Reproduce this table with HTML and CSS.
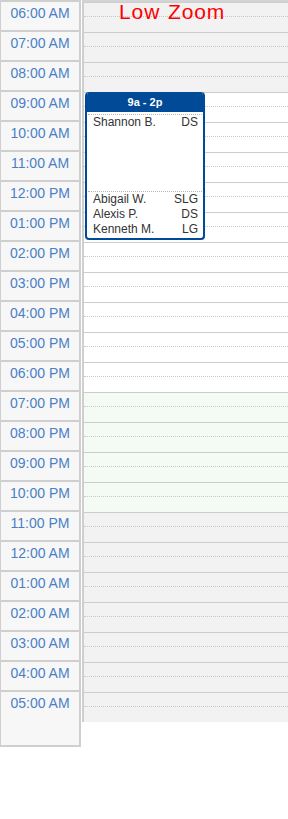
FILE: index.html
```html
<!DOCTYPE html>
<html>
<head>
<meta charset="utf-8">
<link rel="stylesheet" href="styles.css">
</head>
<body>
<div class="calendar">
  <div class="times">
    <div class="time">06:00 AM</div>
    <div class="time">07:00 AM</div>
    <div class="time">08:00 AM</div>
    <div class="time">09:00 AM</div>
    <div class="time">10:00 AM</div>
    <div class="time">11:00 AM</div>
    <div class="time">12:00 PM</div>
    <div class="time">01:00 PM</div>
    <div class="time">02:00 PM</div>
    <div class="time">03:00 PM</div>
    <div class="time">04:00 PM</div>
    <div class="time">05:00 PM</div>
    <div class="time">06:00 PM</div>
    <div class="time">07:00 PM</div>
    <div class="time">08:00 PM</div>
    <div class="time">09:00 PM</div>
    <div class="time">10:00 PM</div>
    <div class="time">11:00 PM</div>
    <div class="time">12:00 AM</div>
    <div class="time">01:00 AM</div>
    <div class="time">02:00 AM</div>
    <div class="time">03:00 AM</div>
    <div class="time">04:00 AM</div>
    <div class="time time-last">05:00 AM</div>
  </div>
  <div class="grid">
    <div class="title">Low Zoom</div>
    <div class="row off"><div class="half"></div><div class="half2"></div></div>
    <div class="row off"><div class="half"></div><div class="half2"></div></div>
    <div class="row off"><div class="half"></div><div class="half2"></div></div>
    <div class="row"><div class="half"></div><div class="half2"></div></div>
    <div class="row"><div class="half"></div><div class="half2"></div></div>
    <div class="row"><div class="half"></div><div class="half2"></div></div>
    <div class="row"><div class="half"></div><div class="half2"></div></div>
    <div class="row"><div class="half"></div><div class="half2"></div></div>
    <div class="row"><div class="half"></div><div class="half2"></div></div>
    <div class="row"><div class="half"></div><div class="half2"></div></div>
    <div class="row"><div class="half"></div><div class="half2"></div></div>
    <div class="row"><div class="half"></div><div class="half2"></div></div>
    <div class="row"><div class="half"></div><div class="half2"></div></div>
    <div class="row evening"><div class="half"></div><div class="half2"></div></div>
    <div class="row evening"><div class="half"></div><div class="half2"></div></div>
    <div class="row evening"><div class="half"></div><div class="half2"></div></div>
    <div class="row evening"><div class="half"></div><div class="half2"></div></div>
    <div class="row off"><div class="half"></div><div class="half2"></div></div>
    <div class="row off"><div class="half"></div><div class="half2"></div></div>
    <div class="row off"><div class="half"></div><div class="half2"></div></div>
    <div class="row off"><div class="half"></div><div class="half2"></div></div>
    <div class="row off"><div class="half"></div><div class="half2"></div></div>
    <div class="row off"><div class="half"></div><div class="half2"></div></div>
    <div class="row off"><div class="half"></div><div class="half2"></div></div>

    <div class="event">
      <div class="event-head">9a - 2p</div>
      <div class="event-body">
        <div class="section">
          <div class="person"><span>Shannon B.</span><span>DS</span></div>
        </div>
        <div class="spacer"></div>
        <div class="section">
          <div class="person"><span>Abigail W.</span><span>SLG</span></div>
          <div class="person"><span>Alexis P.</span><span>DS</span></div>
          <div class="person"><span>Kenneth M.</span><span>LG</span></div>
        </div>
      </div>
    </div>
  </div>
</div>
</body>
</html>
```
FILE: styles.css
```css
html, body {
  margin: 0;
  padding: 0;
  background: #fff;
}
body {
  font-family: "Liberation Sans", Arial, sans-serif;
}
.calendar {
  display: flex;
  align-items: flex-start;
}
.times {
  flex: none;
  width: 78px;
  border-left: 1px solid #cfcfcf;
  border-right: 2px solid #cfcfcf;
  border-bottom: 2px solid #cfcfcf;
  margin-right: 1px;
  background: #f7f7f7;
}
.time {
  height: 25px;
  padding-top: 3px;
  border-top: 2px solid #cfcfcf;
  text-align: center;
  font-size: 14px;
  line-height: 16px;
  color: #4a7fc6;
}
.time-last {
  height: 50px;
}
.grid {
  flex: 1;
  position: relative;
  border-top: 2px solid #d4d4d4;
  border-left: 2px solid #cfcfcf;
}
.row {
  background: #fff;
}
.row.off {
  background: #f2f2f2;
}
.row.evening {
  background: #f4fbf4;
}
.half {
  height: 13px;
  border-top: 1px solid #cccccc;
  border-bottom: 1px dotted #c8c8c8;
}
.half2 {
  height: 15px;
}
.title {
  position: absolute;
  top: -2px;
  left: 35px;
  font-size: 21px;
  line-height: 24px;
  letter-spacing: 0.9px;
  word-spacing: 1px;
  color: #ff0000;
  z-index: 2;
}
.event {
  position: absolute;
  top: 90px;
  left: 1px;
  width: 116px;
  height: 146px;
  border: 2px solid #004a97;
  border-top: none;
  border-radius: 4px;
  background: #fff;
  overflow: hidden;
  display: flex;
  flex-direction: column;
}
.event-head {
  height: 20px;
  background: #004a97;
  color: #fff;
  font-weight: bold;
  font-size: 11px;
  line-height: 21px;
  text-align: center;
}
.event-body {
  padding: 0 1px;
}
.section {
  border-top: 1px dotted #b5b5b5;
}
.section:first-child {
  margin-top: 2px;
}
.spacer {
  height: 61px;
}
.person {
  display: flex;
  justify-content: space-between;
  padding: 0 4px 0 5px;
  font-size: 12px;
  line-height: 15px;
  color: #333;
}
```
